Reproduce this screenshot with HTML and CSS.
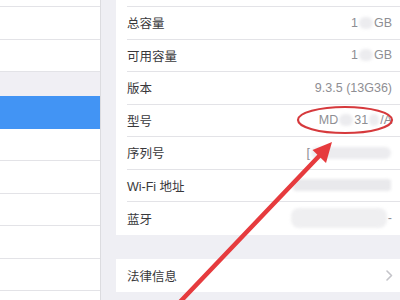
FILE: index.html
```html
<!DOCTYPE html>
<html lang="zh-CN">
<head>
<meta charset="utf-8">
<title>关于本机</title>
<link rel="stylesheet" href="styles.css">
</head>
<body>
<div class="page">
  <aside class="sidebar">
    <div class="side-row"></div>
    <div class="side-row"></div>
    <div class="side-row"></div>
    <div class="side-header"></div>
    <div class="side-row selected"></div>
    <div class="side-row"></div>
    <div class="side-row"></div>
    <div class="side-row"></div>
    <div class="side-row"></div>
    <div class="side-row"></div>
  </aside>
  <main class="main">
    <section class="card first">
      <div class="row"><div class="row-inner"></div></div>
      <div class="row"><div class="row-inner"><span class="label">总容量</span><span class="value">1<span class="smudge w14"></span>GB</span></div></div>
      <div class="row"><div class="row-inner"><span class="label">可用容量</span><span class="value">1<span class="smudge w14"></span>GB</span></div></div>
      <div class="row"><div class="row-inner"><span class="label">版本</span><span class="value">9.3.5 (13G36)</span></div></div>
      <div class="row"><div class="row-inner"><span class="label">型号</span><span class="value">MD<span class="smudge w14"></span>31<span class="smudge w10"></span>/A</span></div></div>
      <div class="row"><div class="row-inner"><span class="label">序列号</span><span class="value">[<span class="smudge w80"></span></span></div></div>
      <div class="row"><div class="row-inner"><span class="label">Wi-Fi 地址</span><span class="value"><span class="smudge bar w98"></span></span></div></div>
      <div class="row"><div class="row-inner"><span class="label">蓝牙</span><span class="value"><span class="smudge tall w96"></span>-</span></div></div>
    </section>
    <section class="card second">
      <div class="row"><div class="row-inner"><span class="label">法律信息</span>
        <svg class="chevron" width="7" height="11" viewBox="0 0 7 11"><polyline points="1,1 5.5,5.5 1,10" fill="none" stroke="#c4c4c9" stroke-width="1.6" stroke-linecap="round" stroke-linejoin="round"/></svg>
      </div></div>
    </section>
  </main>
</div>
<svg class="annotation" width="400" height="300" viewBox="0 0 400 300">
  <ellipse cx="345" cy="120" rx="47" ry="13" fill="none" stroke="#d6393c" stroke-width="2.2"/>
  <line x1="178" y1="304" x2="322" y2="153" stroke="#e63b3e" stroke-width="4.5" stroke-linecap="round"/>
  <polygon points="332,142 326,163 312.5,150" fill="#e63b3e"/>
</svg>
</body>
</html>
```
FILE: styles.css
```css
html, body {
  margin: 0;
  padding: 0;
  width: 400px;
  height: 300px;
  overflow: hidden;
  background: #efeff4;
  font-family: "Liberation Sans", "Noto Sans CJK SC", sans-serif;
}

.page {
  display: flex;
  height: 300px;
  overflow: hidden;
  position: relative;
}

.sidebar {
  width: 100px;
  flex: none;
  background: #ffffff;
  border-right: 1px solid #dcdce0;
  margin-top: -25.5px;
  display: flex;
  flex-direction: column;
}

.side-row {
  height: 32.5px;
  flex: none;
  box-sizing: border-box;
  border-bottom: 1px solid #e3e3e7;
}

.side-header {
  height: 24px;
  flex: none;
  background: #f0eff4;
}

.side-row.selected {
  background: #4294f4;
  border-bottom-color: #4294f4;
}

.main {
  flex: 1;
  padding-left: 15px;
  display: flex;
  flex-direction: column;
  gap: 24.5px;
}

.card {
  background: #ffffff;
  padding-left: 11px;
}

.card.first {
  margin-top: -25.5px;
}

.row {
  height: 32.5px;
}

.card.second .row {
  height: 33px;
}

.row-inner {
  height: 100%;
  box-sizing: border-box;
  border-bottom: 1px solid #e3e3e7;
  display: flex;
  align-items: center;
  justify-content: space-between;
  padding-right: 8px;
}

.row:last-child .row-inner {
  border-bottom: none;
}

.label {
  font-size: 12.5px;
  color: #38383b;
}

.value {
  font-size: 12.5px;
  color: #8e8e93;
  display: flex;
  align-items: center;
}

.smudge {
  display: inline-block;
  height: 12px;
  border-radius: 6px;
  background: #ececef;
  filter: blur(1.5px);
  margin: 0 1px;
}

.smudge.bar {
  height: 12px;
  border-radius: 3px;
  background: #e9e9ec;
}

.smudge.tall {
  height: 20px;
  border-radius: 8px;
  background: #efeff1;
}

.w10 { width: 10px; }
.w14 { width: 14px; }
.w80 { width: 80px; }
.w96 { width: 96px; }
.w98 { width: 98px; }

.chevron {
  margin-right: -1px;
}

.annotation {
  position: absolute;
  left: 0;
  top: 0;
  pointer-events: none;
}
```
